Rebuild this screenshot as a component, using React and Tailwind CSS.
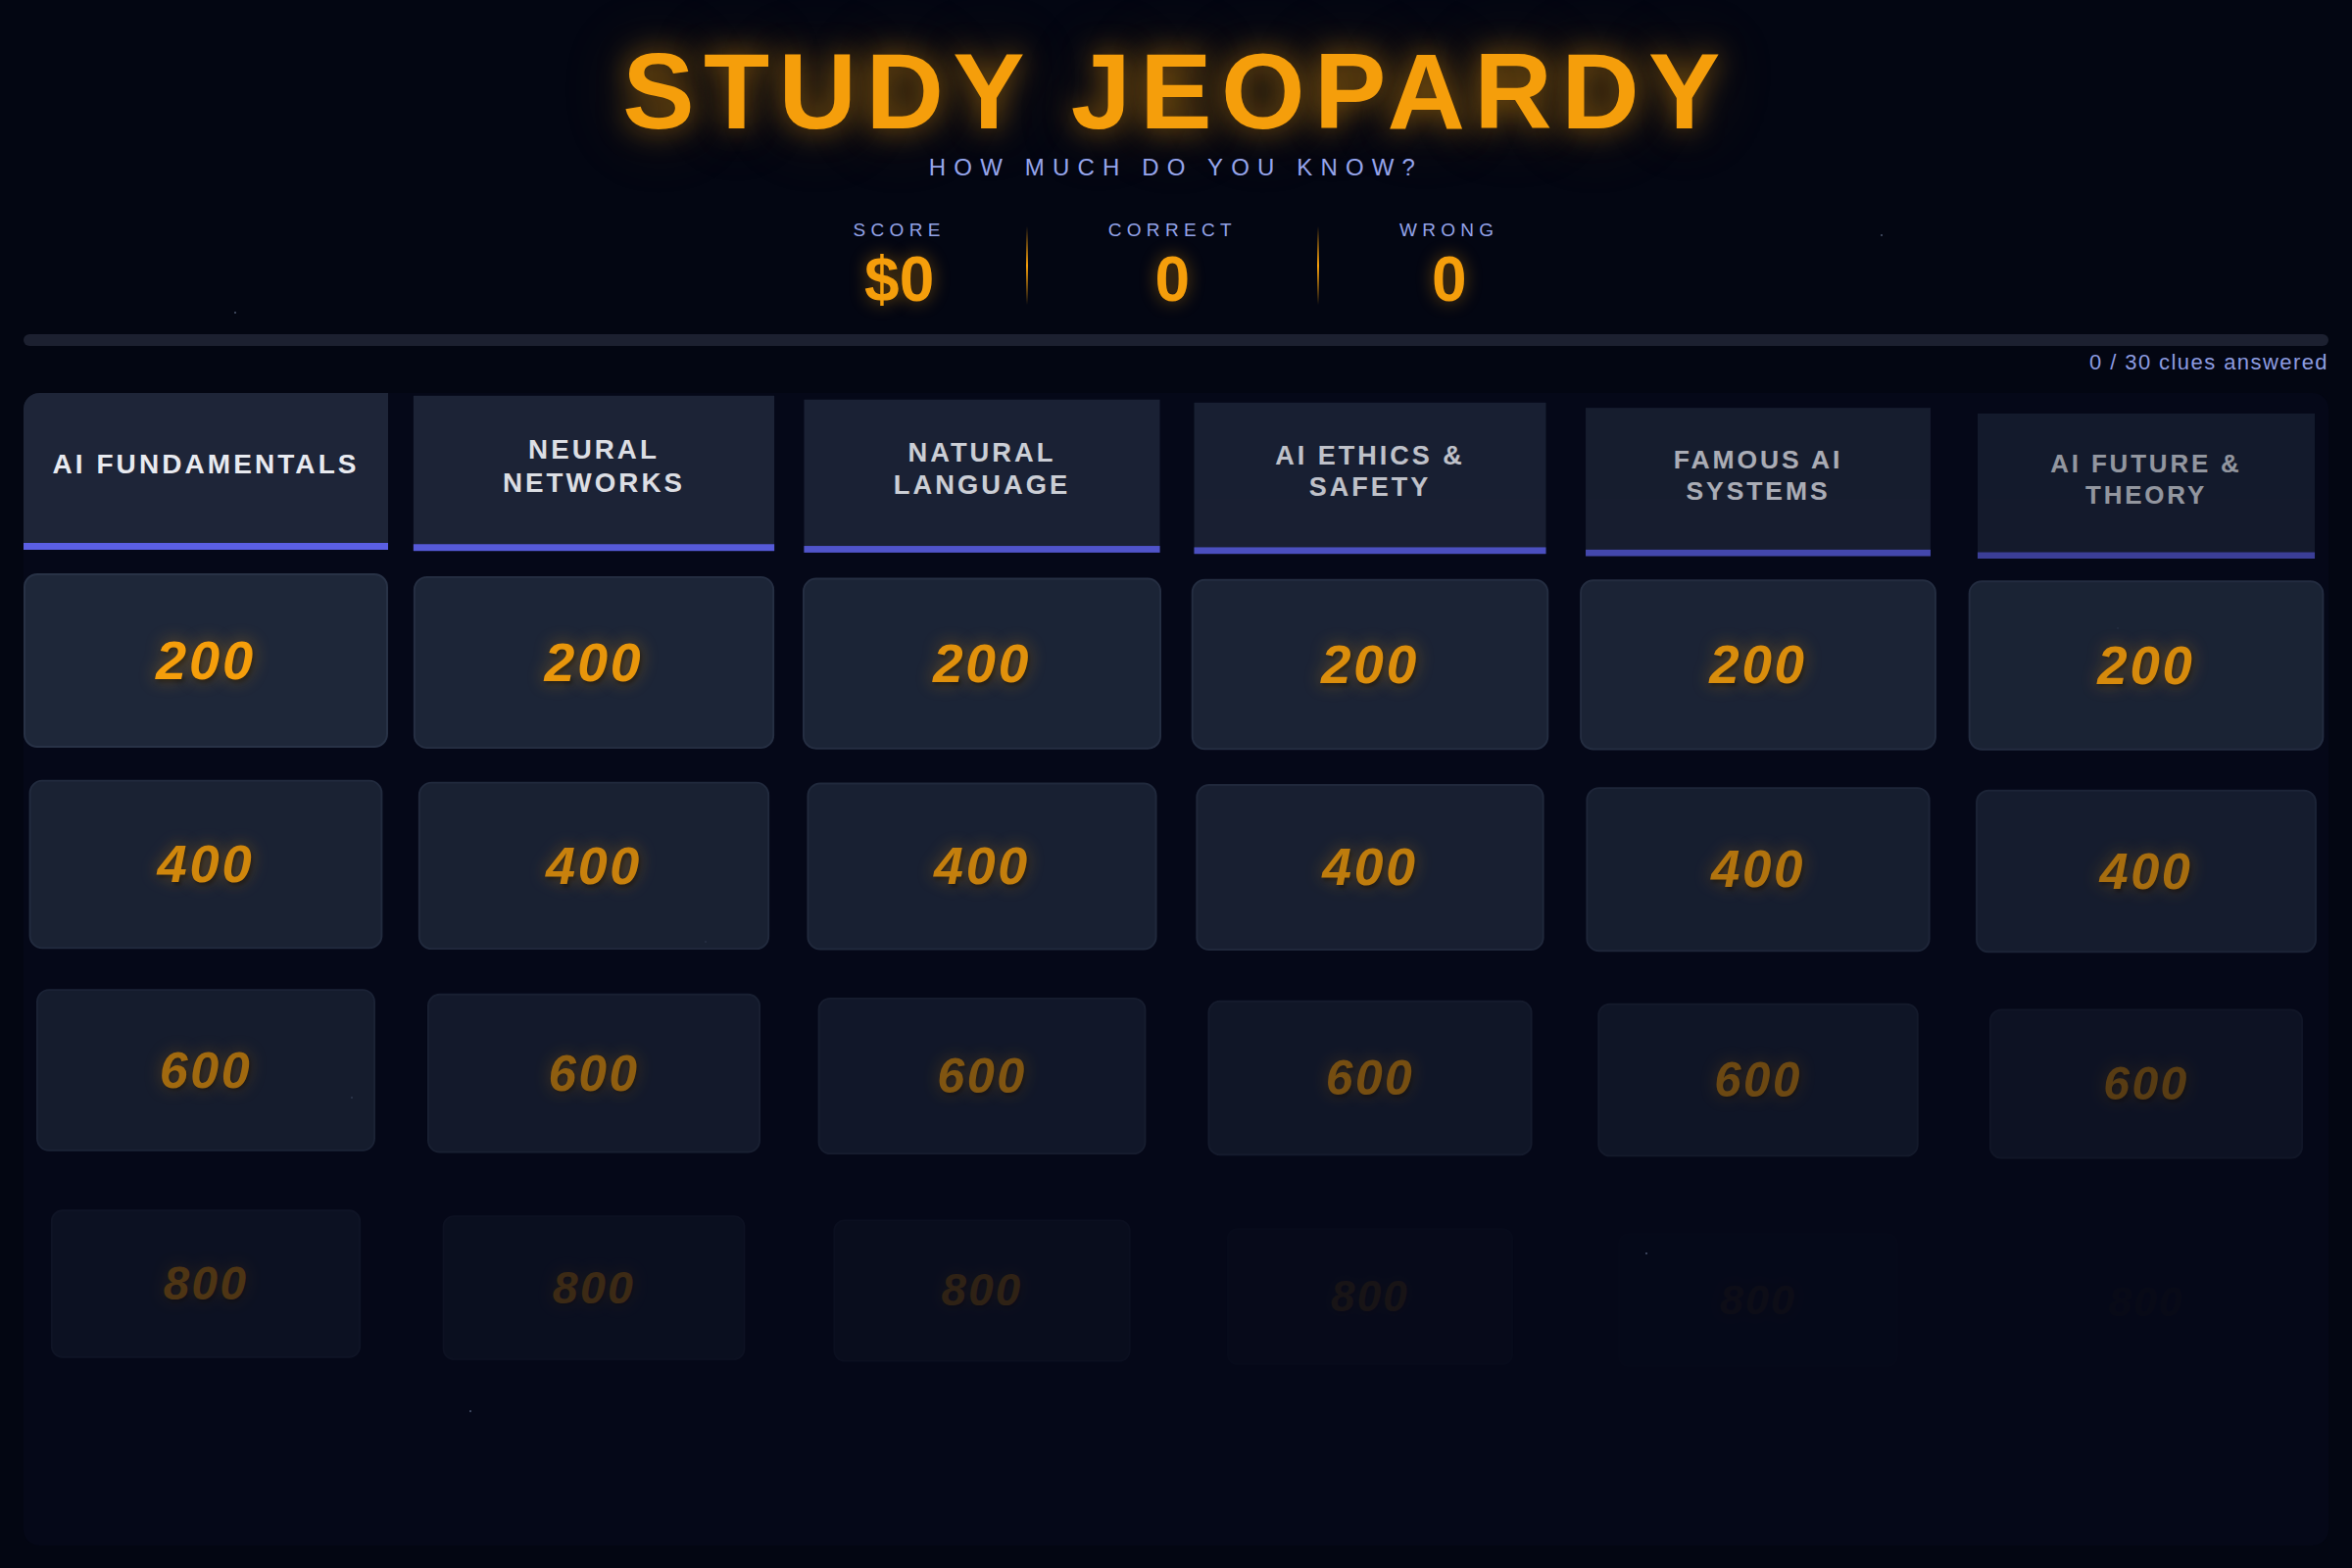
import React from "react";

// Board data
const CATEGORIES = [
  "AI Fundamentals",
  "Neural Networks",
  "Natural Language",
  "AI Ethics & Safety",
  "Famous AI Systems",
  "AI Future & Theory",
];

const VALUES = [200, 400, 600, 800, 1000];

// Snapshot of the staggered intro animation (0 = hidden, 1 = settled)
const HEADER_PROGRESS = [1, 0.96, 0.904, 0.86, 0.784, 0.7];
const CELL_PROGRESS = [
  [1, 0.96, 0.936, 0.92, 0.912, 0.9],
  [0.88, 0.852, 0.84, 0.82, 0.776, 0.74],
  [0.72, 0.656, 0.6, 0.56, 0.52, 0.44],
  [0.4, 0.32, 0.26, 0.14, 0.07, 0.03],
  [0, 0, 0, 0, 0, 0],
];

const PARTICLES = [
  [239, 318],
  [1919, 239],
  [479, 1439],
  [719, 960],
  [1679, 1278],
  [358, 1119],
  [2160, 640],
];

const introStyle = (p) => {
  const s = 0.75 + 0.25 * p;
  return {
    opacity: Math.pow(p, 1.3),
    transform: `translateY(${50 * (1 - p)}px) scale(${s})`,
  };
};

const Stat = ({ label, value }) => (
  <div className="flex flex-col items-center">
    <div className="text-[19px] leading-none tracking-[0.28em] text-[#94a3e8]">
      {label}
    </div>
    <div className="mt-[9px] text-[64px] leading-none font-bold text-[#f59e0b] [text-shadow:0_0_18px_rgba(245,158,11,0.45)]">
      {value}
    </div>
  </div>
);

const Divider = () => (
  <div className="w-[2px] h-[80px] bg-gradient-to-b from-transparent via-[#f59e0b] to-transparent" />
);

export default function App() {
  return (
    <div className="relative min-h-screen overflow-hidden bg-[#030612] px-6 pb-[22px] font-['Liberation_Sans',Arial,sans-serif]">
      {/* Floating particles */}
      {PARTICLES.map(([x, y], i) => (
        <span
          key={i}
          className="absolute w-[2px] h-[2px] rounded-full bg-[#8090b0] opacity-60"
          style={{ left: x, top: y }}
        />
      ))}

      {/* Title */}
      <header className="pt-[38px] flex flex-col items-center">
        <h1 className="text-[110px] leading-none font-bold tracking-[0.085em] text-[#f59e0b] [text-shadow:0_0_30px_rgba(245,158,11,0.55),0_0_70px_rgba(245,158,11,0.25)]">
          STUDY JEOPARDY
        </h1>
        <p className="mt-[11px] text-[24px] leading-none tracking-[0.34em] text-[#96a5ec]">
          HOW MUCH DO YOU KNOW?
        </p>

        {/* Scoreboard */}
        <div className="mt-[42px] flex items-center gap-[82px]">
          <Stat label="SCORE" value="$0" />
          <Divider />
          <Stat label="CORRECT" value="0" />
          <Divider />
          <Stat label="WRONG" value="0" />
        </div>
      </header>

      {/* Progress */}
      <div className="mt-[24px] h-[12px] w-full rounded-full bg-[#1c2030]" />
      <div className="mt-[6px] text-right text-[22px] leading-none tracking-[0.065em] text-[#8d9ce0]">
        0 / 30 clues answered
      </div>

      {/* Board */}
      <div className="mt-[20px] grid grid-cols-6 gap-6 rounded-2xl overflow-hidden bg-[#050818] pb-[6px]">
        {CATEGORIES.map((cat, i) => (
          <div
            key={cat}
            style={introStyle(HEADER_PROGRESS[i])}
            className="h-[160px] flex items-center justify-center px-6 pb-[8px] text-center bg-[#1e2538] border-b-[7px] border-[#5b5fe3] text-[28px] leading-[34px] font-bold tracking-[0.11em] uppercase text-[#e8eaf0]"
          >
            {cat}
          </div>
        ))}

        {VALUES.map((value, r) =>
          CATEGORIES.map((cat, c) => (
            <button
              key={`${cat}-${value}`}
              style={introStyle(CELL_PROGRESS[r][c])}
              className="h-[178px] flex items-center justify-center rounded-[14px] bg-[#1e2739] border-2 border-[#283246]"
            >
              <span className="text-[56px] leading-none font-bold italic tracking-[0.05em] text-[#f59e0b] [text-shadow:0_0_18px_rgba(245,158,11,0.45),2px_3px_4px_rgba(0,0,0,0.5)]">
                {value}
              </span>
            </button>
          ))
        )}
      </div>
    </div>
  );
}
